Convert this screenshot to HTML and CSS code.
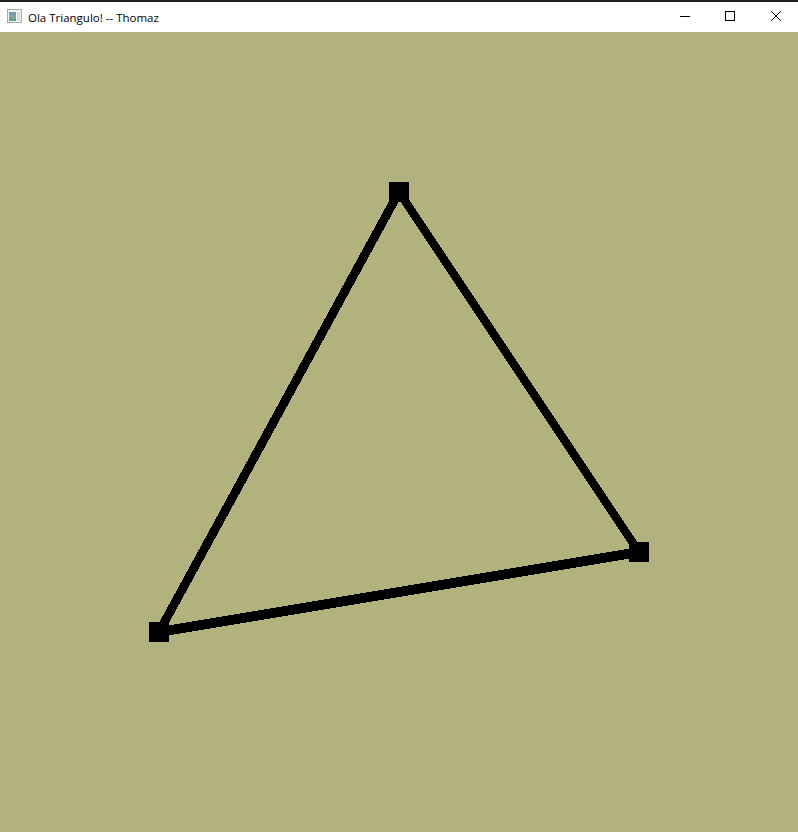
FILE: index.html
```html
<!DOCTYPE html>
<html lang="en">
<head>
  <meta charset="UTF-8" />
  <meta name="viewport" content="width=device-width, initial-scale=1.0" />
  <title>Ola Triangulo! -- Thomaz</title>
  <link rel="stylesheet" href="styles.css">
</head>
<body>
  <div class="window">
    <div class="titlebar">
      <svg class="app-icon" width="16" height="16" viewBox="0 0 16 16">
        <defs>
          <linearGradient id="icon-fill" x1="0" y1="0" x2="0" y2="1">
            <stop offset="0" stop-color="#6f93c4" />
            <stop offset="0.5" stop-color="#7fa8a4" />
            <stop offset="1" stop-color="#5f9a78" />
          </linearGradient>
        </defs>
        <rect x="0.5" y="0.5" width="14" height="13" fill="#f4f4f4" stroke="#a9a9a9" />
        <rect x="2" y="3" width="7" height="9" fill="url(#icon-fill)" />
        <rect x="10" y="3" width="3" height="9" fill="#d3dcd8" />
      </svg>
      <span class="title">Ola Triangulo! -- Thomaz</span>
      <div class="controls">
        <div class="control">
          <svg width="12" height="12" viewBox="0 0 12 12"><path d="M2 6.5H12" stroke="#000" fill="none" /></svg>
        </div>
        <div class="control">
          <svg width="12" height="12" viewBox="0 0 12 12"><rect x="1.5" y="1.5" width="9" height="9" stroke="#000" fill="none" /></svg>
        </div>
        <div class="control">
          <svg width="12" height="12" viewBox="0 0 12 12"><path d="M1 1L11 11M11 1L1 11" stroke="#000" fill="none" /></svg>
        </div>
      </div>
    </div>
    <svg class="canvas" width="798" height="800" viewBox="0 32 798 800">
      <polygon points="394,192 404,192 164,632 154,632" />
      <polygon points="394,192 404,192 644,552 634,552" />
      <polygon points="159,627 639,547 639,557 159,637" />
      <rect x="389" y="182" width="20" height="20" />
      <rect x="149" y="622" width="20" height="20" />
      <rect x="629" y="542" width="20" height="20" />
    </svg>
  </div>
</body>
</html>
```

FILE: styles.css
```css
html, body {
  margin: 0;
  padding: 0;
  width: 100%;
  height: 100%;
  overflow: hidden;
  background-color: #b2b27f;
}

.window {
  display: flex;
  flex-direction: column;
  height: 100%;
}

.titlebar {
  display: flex;
  align-items: center;
  height: 30px;
  flex: none;
  background-color: white;
  border-top: 2px solid #1f1f1f;
  font-family: "Open Sans", "Noto Sans", sans-serif;
  font-size: 11.5px;
  color: #000;
}

.app-icon {
  margin-left: 7px;
  margin-right: 5px;
}

.title {
  white-space: nowrap;
}

.controls {
  display: flex;
  margin-left: auto;
}

.control {
  display: flex;
  align-items: center;
  justify-content: center;
  box-sizing: border-box;
  width: 46px;
  height: 30px;
  padding: 0 0 2px 2px;
}

.canvas {
  display: block;
  flex: none;
  background-color: #b2b27f;
  shape-rendering: crispEdges;
}
```
